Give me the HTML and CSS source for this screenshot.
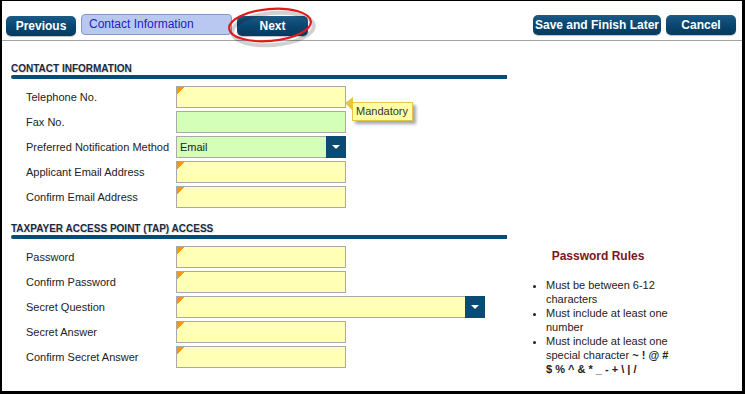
FILE: index.html
```html
<!DOCTYPE html>
<html lang="en">
<head>
<meta charset="UTF-8" />
<title>Contact Information</title>
<link rel="stylesheet" href="styles.css">
</head>
<body>
<div class="frame">
    <div class="toolbar">
        <div class="nav-left">
            <button class="btn">Previous</button>
            <div class="step">Contact Information</div>
            <div class="next-wrap">
                <button class="btn btn-next">Next</button>
                <svg class="ring" width="96" height="46" viewBox="0 0 96 46">
                    <ellipse cx="50" cy="26" rx="41" ry="16" fill="none" stroke="rgba(0,0,0,0.18)" stroke-width="4" transform="rotate(-5 50 26)"/>
                    <ellipse cx="47" cy="22" rx="41" ry="16" fill="none" stroke="#e11b1b" stroke-width="2.2" transform="rotate(-5 47 22)"/>
                </svg>
            </div>
        </div>
        <div class="nav-right">
            <button class="btn btn-save">Save and Finish Later</button>
            <button class="btn">Cancel</button>
        </div>
    </div>

    <div class="section first">
        <h2 class="section-title">Contact Information</h2>
        <div class="section-bar"></div>
        <div class="rows">
            <div class="row">
                <label>Telephone No.</label>
                <div class="field-wrap">
                    <input class="field required" type="text">
                    <div class="tip">Mandatory</div>
                </div>
            </div>
            <div class="row">
                <label>Fax No.</label>
                <input class="field optional" type="text">
            </div>
            <div class="row">
                <label>Preferred Notification Method</label>
                <div class="select optional">
                    <span class="select-value">Email</span>
                    <span class="select-btn"></span>
                </div>
            </div>
            <div class="row">
                <label>Applicant Email Address</label>
                <input class="field required" type="text">
            </div>
            <div class="row">
                <label>Confirm Email Address</label>
                <input class="field required" type="text">
            </div>
        </div>
    </div>

    <div class="section second">
        <h2 class="section-title">Taxpayer Access Point (TAP) Access</h2>
        <div class="section-bar"></div>
        <div class="section-body">
            <div class="rows">
                <div class="row">
                    <label>Password</label>
                    <input class="field required" type="password">
                </div>
                <div class="row">
                    <label>Confirm Password</label>
                    <input class="field required" type="password">
                </div>
                <div class="row">
                    <label>Secret Question</label>
                    <div class="select required wide">
                        <span class="select-value"></span>
                        <span class="select-btn"></span>
                    </div>
                </div>
                <div class="row">
                    <label>Secret Answer</label>
                    <input class="field required" type="text">
                </div>
                <div class="row">
                    <label>Confirm Secret Answer</label>
                    <input class="field required" type="text">
                </div>
            </div>
            <div class="rules">
                <h3>Password Rules</h3>
                <ul>
                    <li>Must be between 6-12 characters</li>
                    <li>Must include at least one number</li>
                    <li>Must include at least one special character <b>~ ! @ #</b><br><b>$ % ^ &amp; * _ - + \ | /</b></li>
                </ul>
            </div>
        </div>
    </div>
</div>
</body>
</html>
```

FILE: styles.css
```css
html, body {
    margin: 0;
    padding: 0;
    background: #fff;
}

.frame {
    box-sizing: border-box;
    width: 745px;
    height: 394px;
    border-style: solid;
    border-color: #000;
    border-width: 1px 3px 3px 2px;
    font-family: 'Liberation Sans', Arial, sans-serif;
    font-size: 11px;
    color: #222;
    overflow: hidden;
}

/* top navigation */
.toolbar {
    box-sizing: border-box;
    height: 40px;
    padding: 13px 6px 0 4px;
    display: flex;
    justify-content: space-between;
    align-items: flex-start;
    border-bottom: 1px solid #a3a3a3;
}

.nav-left, .nav-right {
    display: flex;
    align-items: flex-start;
}

.nav-left { gap: 5px; }
.nav-right { gap: 5px; padding-top: 1px; }

.btn {
    height: 20px;
    width: 70px;
    padding: 0;
    margin: 0;
    border: none;
    border-radius: 5px;
    background: linear-gradient(#1b5b86, #0a4670 50%, #033a5f);
    color: #fff;
    font-family: 'Liberation Sans', Arial, sans-serif;
    font-weight: bold;
    font-size: 12px;
    cursor: pointer;
    box-shadow: 0 1px 1px rgba(0,0,0,0.25);
}

.nav-left > .btn { margin-top: 2px; }

.btn-save { width: 128px; }

.step {
    box-sizing: border-box;
    width: 151px;
    height: 21px;
    padding: 2px 0 0 7px;
    background: #b9c8f1;
    border: 1px solid #8797c9;
    border-radius: 4px;
    color: #2121cc;
    font-size: 12px;
    line-height: 15px;
}

.next-wrap {
    position: relative;
    margin-top: 2px;
}

.btn-next { width: 71px; }

.ring {
    position: absolute;
    left: -14px;
    top: -13px;
    pointer-events: none;
}

/* sections */
.section { padding-left: 9px; }
.section.first { padding-top: 22px; }
.section.second { padding-top: 15px; }

.section-title {
    margin: 0;
    font-size: 10px;
    line-height: 12px;
    font-weight: bold;
    text-transform: uppercase;
    color: #1b2b3f;
    text-shadow: 1px 1px 1px rgba(0,0,0,0.15);
}

.section-bar {
    width: 496px;
    height: 4px;
    background: #0b4a72;
    border-radius: 3px 0 0 3px;
    margin-bottom: 7px;
}

.rows {
    display: flex;
    flex-direction: column;
    gap: 3px;
    padding-left: 15px;
}

.row {
    display: flex;
    align-items: center;
    height: 22px;
}

.row label {
    width: 150px;
    flex: none;
}

.field-wrap { position: relative; }

.field, .select {
    box-sizing: border-box;
    width: 170px;
    height: 22px;
    margin: 0;
    border: 1px solid #a9a9a9;
    font-family: inherit;
    font-size: 11px;
    outline: none;
}

.required {
    background: linear-gradient(135deg, #fb9610 5px, #ffffb5 5px);
}

.optional {
    background: #d3ffb9;
}

.select {
    position: relative;
    display: flex;
    align-items: center;
    padding-left: 3px;
}

.select.wide { width: 309px; }

.select-btn {
    position: absolute;
    right: -1px;
    top: -1px;
    width: 20px;
    height: 22px;
    background: #0b4a72;
}

.select-btn::after {
    content: "";
    position: absolute;
    left: 6px;
    top: 9px;
    border-left: 4px solid transparent;
    border-right: 4px solid transparent;
    border-top: 4px solid #fff;
}

/* tooltip */
.tip {
    position: absolute;
    left: 176px;
    top: 16px;
    padding: 1px 4px 2px 3px;
    background: #ffffa6;
    border: 1px solid #e5c545;
    color: #333;
    white-space: nowrap;
    line-height: 14px;
    box-shadow: 3px 3px 3px rgba(0,0,0,0.35);
}

.tip::before {
    content: "";
    position: absolute;
    left: -8px;
    top: -6px;
    border-top: 6px solid transparent;
    border-right: 8px solid #e5c545;
    border-bottom: 8px solid transparent;
    width: 0;
    height: 0;
}

/* password rules */
.section-body {
    display: flex;
    align-items: flex-start;
}

.rules {
    width: 160px;
    margin-left: 33px;
    padding-top: 3px;
}

.rules h3 {
    margin: 0 0 15px;
    text-align: center;
    font-size: 12px;
    line-height: 14px;
    color: #7a1522;
}

.rules ul {
    margin: 0;
    padding-left: 28px;
    padding-right: 2px;
    line-height: 14px;
}
```
